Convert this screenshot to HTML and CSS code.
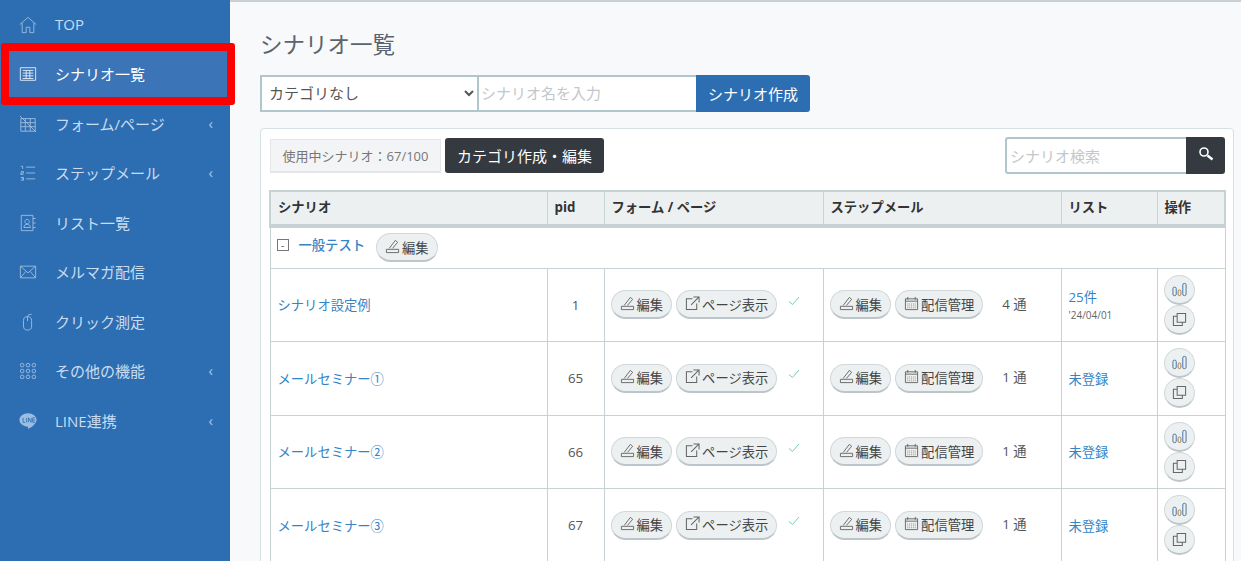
FILE: index.html
```html
<!DOCTYPE html>
<html lang="ja">
<head>
    <meta charset="UTF-8">
    <title>シナリオ一覧</title>
    <link rel="stylesheet" href="styles.css">
</head>
<body>
    <svg class="defs" width="0" height="0">
        <symbol id="i-edit" viewBox="0 0 16 16"><path d="M4.500 10 11 1.500l2.500 2L8 10M1.500 11h13v3.500h-13z" fill="none" stroke="currentColor"/></symbol>
        <symbol id="i-open" viewBox="0 0 16 16"><path d="M8 3H1.500v11.500h11V8M9 1h6v6M15 1 6.500 9.500" fill="none" stroke="currentColor" stroke-width="1.100"/></symbol>
        <symbol id="i-cal" viewBox="0 0 16 16"><path d="M1.500 3h13v11.500h-13zM1.500 5.500h13M4 1v3M12 1v3" fill="none" stroke="currentColor"/><path d="M3.500 8.500h9M3.500 10.500h9M3.500 12.500h9" fill="none" stroke="#b98a5a" stroke-dasharray="1 1"/></symbol>
        <symbol id="i-bars" viewBox="0 0 16 16"><rect x="1" y="5.500" width="3.500" height="9" rx="1.500" fill="none" stroke="#3f6f9f"/><rect x="6.500" y="8.500" width="3" height="6" rx="1.500" fill="none" stroke="#a8743f"/><rect x="11.500" y="1.500" width="3.500" height="13" rx="1.500" fill="none" stroke="#3f6f9f"/></symbol>
        <symbol id="i-copy" viewBox="0 0 16 16"><path d="M5.500 1.500h9v9.500h-9z M5.500 4.500H1.500V14.500H11V11" fill="none" stroke="currentColor" stroke-width="1.100"/></symbol>
        <symbol id="i-check" viewBox="0 0 12 10"><path d="M1 5.500 4.500 8.500 11 1" fill="none" stroke="currentColor"/></symbol>
    </svg>

    <div class="layout">
        <nav class="sidebar">
            <a class="nav-item">
                <svg class="nav-icon" viewBox="0 0 20 20"><path d="M1 9.500 10 1.500l9 8M3.500 7.500v11h4.500v-6h4v6h4.500v-11" fill="none" stroke="currentColor"/></svg>
                <span>TOP</span>
            </a>
            <a class="nav-item active">
                <svg class="nav-icon" viewBox="0 0 20 20"><path d="M1.500 3h17v14h-17zM4 6h12M4 9h12M4 12h12M4 15h12M8 6v9M12 6v9" fill="none" stroke="currentColor"/></svg>
                <span>シナリオ一覧</span>
            </a>
            <a class="nav-item">
                <svg class="nav-icon" viewBox="0 0 20 20"><path d="M2 4h16v14H2zM2 8.500h16M2 13h16M7 4v14M12.500 4v14M1 1l18 18" fill="none" stroke="currentColor"/></svg>
                <span>フォーム/ページ</span><i class="chevron">‹</i>
            </a>
            <a class="nav-item">
                <svg class="nav-icon" viewBox="0 0 20 20"><path d="M8 3.500h10M8 10h10M8 16.500h10M2 2.500h2v3M2 8.500h3v1.500H2v1.500h3M2 15h3v3H2M3 16.500h2" fill="none" stroke="currentColor"/></svg>
                <span>ステップメール</span><i class="chevron">‹</i>
            </a>
            <a class="nav-item">
                <svg class="nav-icon" viewBox="0 0 20 20"><path d="M2.500 1.500h13v17h-13zM15.500 5h3M15.500 10h3M15.500 15h3M5.500 15c0-2.500 1.500-3.500 3.500-3.500s3.500 1 3.500 3.500zM9 6a2.500 2.500 0 1 0 .01 0z" fill="none" stroke="currentColor"/></svg>
                <span>リスト一覧</span>
            </a>
            <a class="nav-item">
                <svg class="nav-icon" viewBox="0 0 20 20"><path d="M1.500 3.500h17v13h-17zM1.500 3.500 10 11l8.500-7.500M1.500 16.500l6-7M18.500 16.500l-6-7" fill="none" stroke="currentColor"/></svg>
                <span>メルマガ配信</span>
            </a>
            <a class="nav-item">
                <svg class="nav-icon" viewBox="0 0 20 20"><path d="M5 8.500a4.500 4.500 0 0 1 9 0v6a4.500 4.500 0 0 1-9 0zM9.500 4V9M9.500 4c0-2 2-2.500 4.500-2.500" fill="none" stroke="currentColor"/></svg>
                <span>クリック測定</span>
            </a>
            <a class="nav-item">
                <svg class="nav-icon" viewBox="0 0 20 20" fill="none" stroke="currentColor"><circle cx="3.500" cy="3.500" r="2"/><circle cx="10" cy="3.500" r="2"/><circle cx="16.500" cy="3.500" r="2"/><circle cx="3.500" cy="10" r="2"/><circle cx="10" cy="10" r="2"/><circle cx="16.500" cy="10" r="2"/><circle cx="3.500" cy="16.500" r="2"/><circle cx="10" cy="16.500" r="2"/><circle cx="16.500" cy="16.500" r="2"/></svg>
                <span>その他の機能</span><i class="chevron">‹</i>
            </a>
            <a class="nav-item">
                <svg class="nav-icon" viewBox="0 0 20 20"><path d="M10 1.500c5.300 0 9.500 3.300 9.500 7.500 0 3.800-5 8-9 9.500-.7.200-.5-1-.4-2C4.500 16 .5 13 .5 9 .5 4.800 4.700 1.500 10 1.500z" fill="currentColor"/><path d="M4.500 6.500v5h2.500M8.500 6.500v5M10.500 11.500v-5l3 5v-5M18 6.500h-2.800v5H18M15.200 9H18" fill="none" stroke="#2d6eb2" stroke-width=".9"/></svg>
                <span>LINE連携</span><i class="chevron">‹</i>
            </a>
            <div class="highlight"></div>
        </nav>

        <main class="content">
            <h1>シナリオ一覧</h1>
            <div class="create-bar">
                <select class="create-select"><option>カテゴリなし</option></select>
                <input class="create-input" placeholder="シナリオ名を入力">
                <button class="btn-blue">シナリオ作成</button>
            </div>

            <section class="card">
                <div class="card-top">
                    <span class="usage">使用中シナリオ：67/100</span>
                    <button class="btn-dark">カテゴリ作成・編集</button>
                    <div class="search">
                        <input placeholder="シナリオ検索">
                        <button aria-label="検索">
                            <svg viewBox="0 0 16 16" width="16" height="16"><circle cx="6" cy="6" r="4" fill="none" stroke="#fff" stroke-width="1.600"/><path d="m9.500 9.500 5 4" stroke="#fff" stroke-width="2.400" fill="none"/></svg>
                        </button>
                    </div>
                </div>

                <table class="scenarios">
                    <colgroup>
                        <col class="c-name"><col class="c-pid"><col class="c-form"><col class="c-step"><col class="c-list"><col class="c-op">
                    </colgroup>
                    <thead>
                        <tr><th>シナリオ</th><th>pid</th><th>フォーム / ページ</th><th>ステップメール</th><th>リスト</th><th>操作</th></tr>
                    </thead>
                    <tbody>
                        <tr class="cat-row">
                            <td colspan="6">
                                <div class="cat-cell">
                                    <span class="toggle">-</span>
                                    <a class="cat-name">一般テスト</a>
                                    <a class="pill"><svg><use href="#i-edit"/></svg>編集</a>
                                </div>
                            </td>
                        </tr>
                        <tr>
                            <td class="text-cell"><a>シナリオ設定例</a></td>
                            <td class="center">1</td>
                            <td><div class="cell-row"><a class="pill"><svg><use href="#i-edit"/></svg>編集</a><a class="pill"><svg><use href="#i-open"/></svg>ページ表示</a><svg class="check"><use href="#i-check"/></svg></div></td>
                            <td><div class="cell-row"><a class="pill"><svg><use href="#i-edit"/></svg>編集</a><a class="pill"><svg><use href="#i-cal"/></svg>配信管理</a><span class="count">4 通</span></div></td>
                            <td class="text-cell"><a>25件</a><div class="date">'24/04/01</div></td>
                            <td><div class="ops"><a class="round"><svg><use href="#i-bars"/></svg></a><a class="round"><svg><use href="#i-copy"/></svg></a></div></td>
                        </tr>
                        <tr>
                            <td class="text-cell"><a>メールセミナー①</a></td>
                            <td class="center">65</td>
                            <td><div class="cell-row"><a class="pill"><svg><use href="#i-edit"/></svg>編集</a><a class="pill"><svg><use href="#i-open"/></svg>ページ表示</a><svg class="check"><use href="#i-check"/></svg></div></td>
                            <td><div class="cell-row"><a class="pill"><svg><use href="#i-edit"/></svg>編集</a><a class="pill"><svg><use href="#i-cal"/></svg>配信管理</a><span class="count">1 通</span></div></td>
                            <td class="text-cell"><a>未登録</a></td>
                            <td><div class="ops"><a class="round"><svg><use href="#i-bars"/></svg></a><a class="round"><svg><use href="#i-copy"/></svg></a></div></td>
                        </tr>
                        <tr>
                            <td class="text-cell"><a>メールセミナー②</a></td>
                            <td class="center">66</td>
                            <td><div class="cell-row"><a class="pill"><svg><use href="#i-edit"/></svg>編集</a><a class="pill"><svg><use href="#i-open"/></svg>ページ表示</a><svg class="check"><use href="#i-check"/></svg></div></td>
                            <td><div class="cell-row"><a class="pill"><svg><use href="#i-edit"/></svg>編集</a><a class="pill"><svg><use href="#i-cal"/></svg>配信管理</a><span class="count">1 通</span></div></td>
                            <td class="text-cell"><a>未登録</a></td>
                            <td><div class="ops"><a class="round"><svg><use href="#i-bars"/></svg></a><a class="round"><svg><use href="#i-copy"/></svg></a></div></td>
                        </tr>
                        <tr>
                            <td class="text-cell"><a>メールセミナー③</a></td>
                            <td class="center">67</td>
                            <td><div class="cell-row"><a class="pill"><svg><use href="#i-edit"/></svg>編集</a><a class="pill"><svg><use href="#i-open"/></svg>ページ表示</a><svg class="check"><use href="#i-check"/></svg></div></td>
                            <td><div class="cell-row"><a class="pill"><svg><use href="#i-edit"/></svg>編集</a><a class="pill"><svg><use href="#i-cal"/></svg>配信管理</a><span class="count">1 通</span></div></td>
                            <td class="text-cell"><a>未登録</a></td>
                            <td><div class="ops"><a class="round"><svg><use href="#i-bars"/></svg></a><a class="round"><svg><use href="#i-copy"/></svg></a></div></td>
                        </tr>
                    </tbody>
                </table>
            </section>
        </main>
    </div>
</body>
</html>
```

FILE: styles.css
```css
* {
    box-sizing: border-box;
}
html, body {
    height: 100%;
    overflow: hidden;
}
body {
    margin: 0;
    font-family: "Open Sans", "Noto Sans CJK JP", sans-serif;
    font-size: 13.300px;
    color: #555;
    background: #f8f9fb;
}
.defs {
    position: absolute;
}
a {
    color: #3484c6;
    text-decoration: none;
}
.layout {
    display: flex;
    height: 561px;
    overflow: hidden;
}

/* sidebar */
.sidebar {
    position: relative;
    flex: none;
    width: 230px;
    background: #2d6eb2;
}
.nav-item {
    display: flex;
    align-items: center;
    height: 49.500px;
    padding: 0 16px 0 19px;
    color: #c9dcf0;
    font-size: 15px;
}
.nav-item span {
    margin: -1px 0 0 18px;
    flex: 1;
}
.nav-icon {
    flex: none;
    width: 18px;
    height: 18px;
    color: #9dbde0;
}
.chevron {
    color: #a9c6e6;
    font-style: normal;
    font-size: 15px;
    margin: -2px 1px 0 0;
}
.nav-item.active {
    background: #3b75b8;
    color: #fff;
}
.nav-item.active .nav-icon {
    color: #e4eef8;
}
.highlight {
    position: absolute;
    left: 1px;
    top: 43px;
    width: 234px;
    height: 62px;
    border: 8px solid #ff0000;
    border-radius: 3px;
}

/* main */
.content {
    flex: 1;
    min-width: 0;
    padding: 28px 7px 0 30px;
    border-top: 2px solid #c9d0d6;
}
h1 {
    margin: 0 0 15px;
    font-size: 22.500px;
    font-weight: 400;
    line-height: 30px;
    color: #5a6470;
}
.create-bar {
    display: flex;
    height: 37px;
    margin-bottom: 16px;
}
.create-select, .create-input {
    height: 37px;
    border: 2px solid #b1c5cc;
    background: #fff;
    font-family: inherit;
    font-size: 15px;
    color: #555;
}
.create-select {
    width: 219px;
    padding-left: 3px;
    padding-bottom: 2px;
}
.create-input {
    width: 217px;
    padding: 0 2px 2px;
    border-left: 0;
    border-right: 0;
}
input::placeholder {
    color: #c3c7cb;
}
.btn-blue {
    width: 114px;
    border: 0;
    border-radius: 0 3px 3px 0;
    background: #2d6eb2;
    color: #fff;
    font-family: inherit;
    font-size: 15px;
}

/* card */
.card {
    height: 500px;
    padding: 8px 8px 0;
    background: #fff;
    border: 1px solid #d5e0e3;
    border-radius: 4px;
}
.card-top {
    display: flex;
    align-items: center;
    height: 37px;
    margin-bottom: 16px;
    padding-left: 1px;
}
.usage {
    display: flex;
    align-items: center;
    justify-content: center;
    width: 171px;
    height: 34px;
    margin-top: 1px;
    margin-right: 4px;
    background: #f3f4f6;
    border: 1px solid #e4e6e9;
    border-bottom-width: 2px;
    color: #777;
    font-size: 13px;
}
.btn-dark {
    width: 159px;
    height: 35px;
    border: 0;
    border-radius: 3px;
    background: #343a40;
    color: #fff;
    font-family: inherit;
    font-size: 15px;
}
.search {
    display: flex;
    margin-left: auto;
}
.search input {
    width: 181px;
    height: 37px;
    padding: 0 3px;
    border: 2px solid #b1c5cc;
    border-right: 0;
    border-radius: 3px 0 0 3px;
    font-family: inherit;
    font-size: 15px;
}
.search button {
    width: 39px;
    height: 37px;
    border: 0;
    border-radius: 0 3px 3px 0;
    background: #343a40;
}

/* table */
.scenarios {
    width: 955px;
    table-layout: fixed;
    border-collapse: collapse;
    border: 1px solid #c8d2d5;
}
.c-name { width: 277px; }
.c-pid { width: 57px; }
.c-form { width: 219px; }
.c-step { width: 238px; }
.c-list { width: 96px; }
.c-op { width: 68px; }
.scenarios th {
    height: 35px;
    padding: 0 7px 3px;
    text-align: left;
    font-size: 13.300px;
    font-weight: 700;
    color: #333;
    background: #ecf0f1;
    border: 1px solid #c8d2d5;
    border-top-width: 2px;
    border-bottom-width: 4px;
}
.scenarios th:first-child { border-left-width: 2px; }
.scenarios th:last-child { border-right-width: 2px; }
.scenarios td {
    height: 73.500px;
    padding: 0 6px;
    border: 1px solid #c8d2d5;
}
.scenarios td.text-cell {
    padding-left: 7px;
}
.scenarios .center {
    text-align: center;
}
.scenarios .cat-row td {
    height: 42px;
}
.cat-cell {
    display: flex;
    align-items: center;
}
.toggle {
    display: inline-flex;
    align-items: center;
    justify-content: center;
    width: 12px;
    height: 12px;
    margin: -6px 10px 0 0;
    border: 1px solid #777;
    font-size: 10px;
    line-height: 1;
}
.cat-name {
    margin: -6px 11px 0 0;
    font-weight: 500;
}
.cell-row {
    display: flex;
    align-items: center;
    gap: 4px;
}
.pill {
    display: inline-flex;
    align-items: center;
    height: 29px;
    padding: 0 8px;
    border: 1px solid #d0d8db;
    border-bottom: 2px solid #bcc6ca;
    border-radius: 15px;
    background: #ecf0f1;
    color: #444;
    font-size: 13.300px;
    white-space: nowrap;
}
.pill svg {
    width: 15px;
    height: 15px;
    margin-right: 2px;
    color: #666;
    margin-top: -2px;
}
.check {
    width: 12px;
    height: 10px;
    margin-left: 7px;
    margin-top: -8px;
    color: #6fd0bd;
}
.count {
    margin-left: 15px;
    margin-top: -3px;
}
.date {
    font-size: 10px;
    color: #666;
    margin-top: 2px;
}
.ops {
    display: flex;
    flex-direction: column;
    align-items: flex-start;
}
.round {
    display: flex;
    align-items: center;
    justify-content: center;
    width: 31px;
    height: 30px;
    border: 1px solid #d0d8db;
    border-bottom: 2px solid #bcc6ca;
    border-radius: 50%;
    background: #ecf0f1;
    color: #666;
}
.round svg {
    width: 15px;
    height: 15px;
}
```
